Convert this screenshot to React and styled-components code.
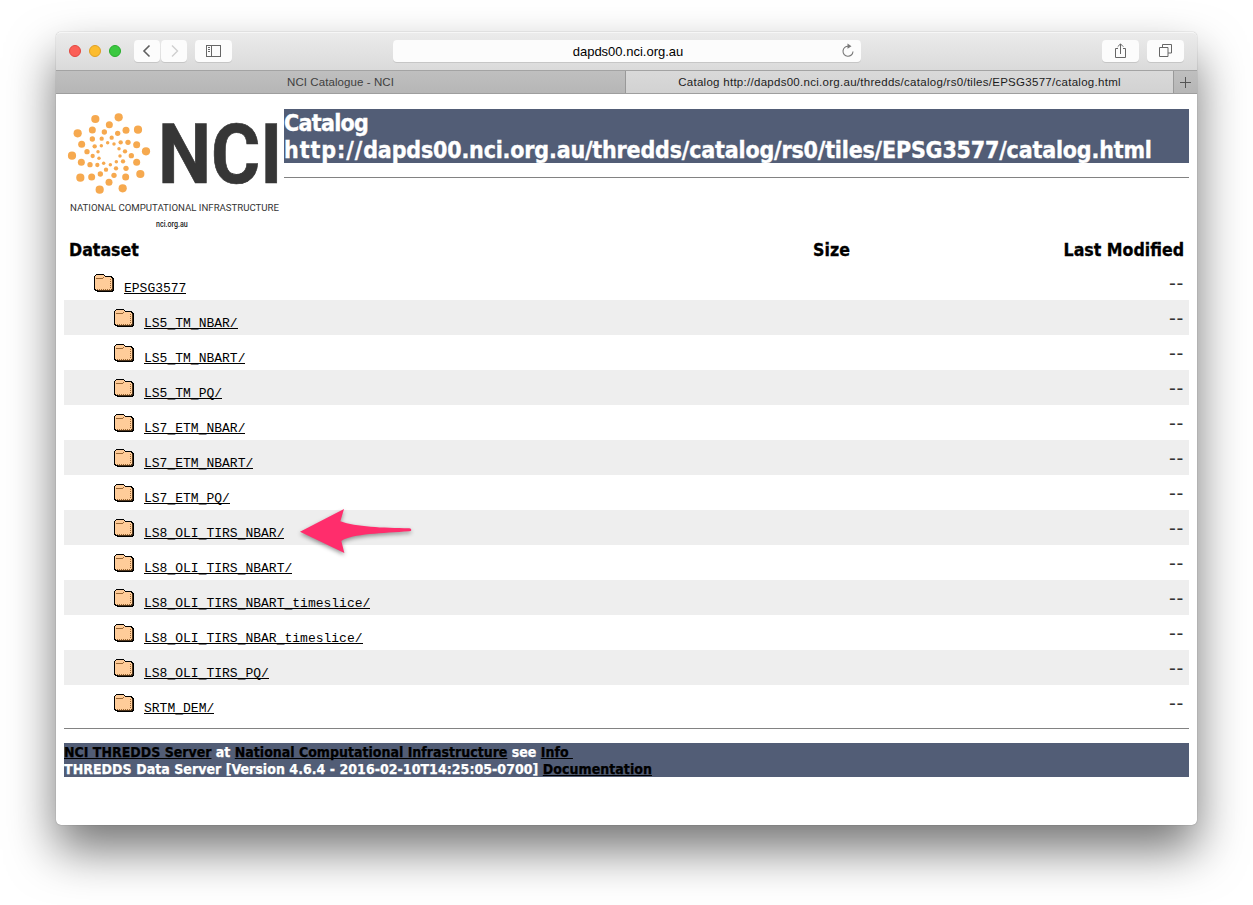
import React from "react";
import styled, { createGlobalStyle } from "styled-components";

const Global = createGlobalStyle`
  * { box-sizing: border-box; }
  body { margin: 0; background: #fff; overflow: hidden; }
`;
const tahoma = `Tahoma, "DejaVu Sans Condensed", "DejaVu Sans", sans-serif`;
const ui = `"Helvetica Neue", "Liberation Sans", Arial, sans-serif`;

const Desktop = styled.div`
  width: 1253px; height: 905px; padding: 32px 56px 80px; overflow: hidden;
`;
const Window = styled.div`
  height: 793px; border-radius: 5px; background: #fff;
  display: flex; flex-direction: column;
  box-shadow: 0 0 1px rgba(0,0,0,.5), 0 25px 48px rgba(0,0,0,.54);
`;
const Toolbar = styled.div`
  height: 38px; display: flex; align-items: center; padding: 0 13px 2px;
  background: linear-gradient(#ebebeb, #dadada);
  border-top: 1px solid #f6f6f6; border-radius: 5px 5px 0 0;
`;
const Light = styled.i`
  width: 12px; height: 12px; border-radius: 50%; margin-right: 8px;
  background: ${p => p.$fill}; border: 1px solid ${p => p.$edge};
`;
const Button = styled.span`
  display: flex; align-items: center; justify-content: center;
  width: ${p => p.$w}px; height: 22px; margin-left: ${p => p.$gap || 0}px;
  border-radius: 4px; background: #fcfcfc; box-shadow: 0 1px 0 #c6c6c6;
`;
const Address = styled(Button)`
  position: relative; padding: 2px 0 0 2px; font: 13px/22px ${ui}; color: #000;
`;
const Reload = styled.svg`position: absolute; right: 6px; top: 3px;`;
const Spacer = styled.span`flex: 1;`;
const TabBar = styled.div`
  height: 24px; display: flex; border-top: 1px solid #a3a3a3; border-bottom: 1px solid #9e9e9e;
`;
const Tab = styled.div`
  width: ${p => p.$w}px; display: flex; align-items: center; justify-content: center;
  font: 11.5px/22px ${ui}; letter-spacing: ${p => p.$ls}px; color: ${p => (p.$active ? "#1c1c1c" : "#404040")};
  background: ${p => (p.$active ? "linear-gradient(#d9d9d9, #d2d2d2)" : "linear-gradient(#bfbfbf, #b6b6b6)")};
  border-right: ${p => (p.$last ? "0" : "1px solid #999")};
`;
const Page = styled.main`padding: 15px 8px 0; font-family: ${tahoma}; color: #000;`;
const Masthead = styled.header`display: flex; height: 126px;`;
const LogoArt = styled.svg`flex: none; overflow: visible;`;
const Heading = styled.div`flex: 1;`;
const Title = styled.h1`
  margin: 0 0 14px; height: 54px; padding-top: 1px; background: #525d76; color: #fff;
  font-size: 23px; font-weight: bold; white-space: nowrap;
  -webkit-text-stroke: 0.35px currentColor;
`;
const TitleLine = styled.span`display: block; height: 27px; line-height: 27px; letter-spacing: ${p => p.$ls}px;`;
const Scheme = styled.span`letter-spacing: 0.93px;`;
const Rule = styled.hr`margin: ${p => p.$top || 0}px 0 0; border: 0; height: 1px; background: #828282;`;
const Columns = styled.div`
  display: grid; grid-template-columns: 744px 37px 1fr; height: 30px; padding: 0 5px;
  font-size: 17.6px; font-weight: bold; line-height: 30px; -webkit-text-stroke: 0.3px currentColor;
`;
const Column = styled.div`
  text-align: ${p => p.$align || "left"}; white-space: nowrap;
`;
const Row = styled.div`
  position: relative; height: 35px; display: flex; align-items: flex-start;
  padding: 9px 5px 0 ${p => (p.$root ? 30 : 50)}px;
  background: ${p => (p.$shade ? "#eeeeee" : "#fff")};
`;
const Link = styled.a`
  height: 13px; margin: 7px auto 0 10px; border-bottom: 1px solid #000;
  color: #000; font: 13px/15px "Courier New", "Liberation Mono", monospace;
`;
const Underscore = styled.span`position: relative; top: 1px;`;
const Modified = styled.span`
  font-size: 19px; line-height: 18px; font-family: "DejaVu Sans", sans-serif;
  letter-spacing: .6px; color: #333;
`;
const Arrow = styled.svg`
  position: absolute; z-index: 1; left: 232px; top: -5px; overflow: visible;
  filter: drop-shadow(0 2px 2px rgba(0,0,0,.4));
`;
const Footer = styled.footer`
  margin-top: 14px; height: 34px; padding-top: 1px; background: #525d76; color: #fff;
  font-size: 14px; font-weight: bold; line-height: 17px; white-space: nowrap;
  -webkit-text-stroke: 0.25px currentColor;
  a { color: #000; text-decoration: underline 1px; text-underline-offset: 1px; text-decoration-skip-ink: none; }
`;
const Line = styled.div`height: 17px; letter-spacing: ${p => p.$ls}px; white-space: pre;`;

const rings = [
  [12.3, [[106,57],[176,52],[234,89],[258,154],[241,222],[188,265],[119,269],[61,233],[36,167],[53,100]]],
  [10.5, [[148,74],[198,91],[230,134],[230,187],[197,231],[147,247],[95,231],[64,187],[65,133],[97,90]]],
  [8, [[133,96],[173,100],[204,127],[214,167],[198,205],[162,226],[121,222],[90,194],[81,155],[97,117]]],
  [6.5, [[155,113],[182,127],[195,154],[189,184],[168,205],[138,209],[112,195],[98,168],[104,139],[125,116]]],
  [5.2, [[143,128],[162,132],[177,146],[180,168],[169,185],[151,194],[131,190],[117,175],[114,155],[124,137]]],
];

const Logo = () => (
  <LogoArt width="220" height="126" viewBox="12 27 660 378">
    {rings.map(([r, pts]) => pts.map(([x, y]) => <circle key={`${x}-${y}`} cx={x} cy={y} r={r} fill="#f6a94f" />))}
    <text x="294" y="250" fontFamily="Roboto, sans-serif" fontWeight="700" fontSize="249" fill="#363636" stroke="#363636" strokeWidth="2" textLength="373" lengthAdjust="spacingAndGlyphs">NCI</text>
    <text x="30" y="333" fontFamily="Roboto, sans-serif" fontWeight="400" fontSize="29" fill="#333" textLength="627" lengthAdjust="spacingAndGlyphs">NATIONAL COMPUTATIONAL INFRASTRUCTURE</text>
    <text x="288" y="381" fontFamily="Roboto, sans-serif" fontWeight="500" fontSize="26" fill="#222" textLength="95" lengthAdjust="spacingAndGlyphs">nci.org.au</text>
  </LogoArt>
);

const Folder = () => (
  <svg width="20" height="18" viewBox="0 0 20 18" shapeRendering="crispEdges">
    <path d="M1 1H2V0H10V1H11V2H18V3H19V4H20V17H19V18H3V17H1V16H0V2H1Z" fill="#000" />
    <path d="M1 2H2V1H10V2H11V3H17V4H18V15H17V16H2V15H1Z" fill="#ffcc99" />
    <path d="M2 4H9V3H10V4H9V5H2Z" fill="#996633" />
    <path d="M18 5H19V16H18V17H4V16H17V15H18Z" fill="#4d3318" />
    <path d="M3 15.5H17M16.5 5V15" stroke="#996633" strokeDasharray="1 1" />
  </svg>
);

const names = ["EPSG3577","LS5_TM_NBAR/","LS5_TM_NBART/","LS5_TM_PQ/","LS7_ETM_NBAR/","LS7_ETM_NBART/","LS7_ETM_PQ/","LS8_OLI_TIRS_NBAR/","LS8_OLI_TIRS_NBART/","LS8_OLI_TIRS_NBART_timeslice/","LS8_OLI_TIRS_NBAR_timeslice/","LS8_OLI_TIRS_PQ/","SRTM_DEM/"];

const DatasetLink = ({ name }) => (
  <Link>
    {name.split("_").map((part, i) => (
      <React.Fragment key={i}>{i > 0 && <Underscore>_</Underscore>}{part}</React.Fragment>
    ))}
  </Link>
);

export default function App() {
  return (
    <Desktop>
      <Global />
      <Window>
        <Toolbar>
          <Light $fill="#fb5f57" $edge="#e2463f" />
          <Light $fill="#fcbc2e" $edge="#dfa023" />
          <Light $fill="#3bc840" $edge="#27ad2c" />
          <Button $w={26} $gap={5}><svg width="12" height="14" fill="none" stroke="#5f5f5f" strokeWidth="1.6"><path d="M8.5 1.5 3 7l5.500 5.500" /></svg></Button>
          <Button $w={26} $gap={1}><svg width="12" height="14" fill="none" stroke="#cfcfcf" strokeWidth="1.4"><path d="M4 1.500 9.500 7 4 12.500" /></svg></Button>
          <Button $w={37} $gap={8}>
            <svg width="15" height="12" fill="none" stroke="#666"><rect x=".5" y=".5" width="14" height="11" /><path d="M5.500 0v12M2 2.500h2M2 4.500h2M2 6.500h2" /></svg>
          </Button>
          <Spacer />
          <Address $w={468}>dapds00.nci.org.au
            <Reload width="14" height="16" fill="none" stroke="#777" strokeWidth="1.1"><path d="M7.500 3.300A5 5 0 1 0 12 8.500" /><path d="M6.500.5 10.500 3.200 6.500 5.800Z" fill="#777" stroke="none" /></Reload>
          </Address>
          <Spacer />
          <Button $w={37} $gap={80}><svg width="13" height="16" fill="none" stroke="#666"><path d="M4 5.500H1.500v9h10v-9H9M6.500 11V1M3.700 3.700 6.500.9l2.800 2.800" /></svg></Button>
          <Button $w={37} $gap={8}><svg width="13" height="13" fill="none" stroke="#666"><path d="M.5 3.500h8.500v9H.5zM3.500 3V.5h9v8.500H9" /></svg></Button>
        </Toolbar>
        <TabBar>
          <Tab $w={570} $ls={0.08}>NCI Catalogue - NCI</Tab>
          <Tab $w={548} $ls={0.28} $active>Catalog http://dapds00.nci.org.au/thredds/catalog/rs0/tiles/EPSG3577/catalog.html</Tab>
          <Tab $w={23} $ls={0} $last><svg width="11" height="11" stroke="#555"><path d="M5.500 0v11M0 5.500h11" /></svg></Tab>
        </TabBar>
        <Page>
          <Masthead>
            <Logo />
            <Heading>
              <Title>
                <TitleLine $ls={-0.7}>Catalog</TitleLine>
                <TitleLine $ls={-0.19}><Scheme>http://</Scheme>dapds00.nci.org.au/thredds/catalog/rs0/tiles/EPSG3577/catalog.html</TitleLine>
              </Title>
              <Rule />
            </Heading>
          </Masthead>
          <Columns>
            <Column>Dataset</Column><Column $align="center">Size</Column><Column $align="right">Last Modified</Column>
          </Columns>
          {names.map((n, i) => (
            <Row key={n} $root={i === 0} $shade={i % 2 === 1}>
              <Folder /><DatasetLink name={n} /><Modified>--</Modified>
              {i === 7 && (
                <Arrow width="120" height="55" viewBox="0 0 360 165">
                  <path d="M12 80 144 12 133 49C180 66 260 69 340 70Q346 71 346 75 346 79 340 79C260 85 170 86 136 108L145 144Z" fill="#ff2d6c" />
                </Arrow>
              )}
            </Row>
          ))}
          <Rule $top={8} />
          <Footer>
            <Line $ls={0}><a>NCI THREDDS Server</a> at <a>National Computational Infrastructure</a> see <a>Info </a></Line>
            <Line $ls={0.04}>THREDDS Data Server [Version 4.6.4 - 2016-02-10T14:25:05-0700] <a>Documentation</a></Line>
          </Footer>
        </Page>
      </Window>
    </Desktop>
  );
}
